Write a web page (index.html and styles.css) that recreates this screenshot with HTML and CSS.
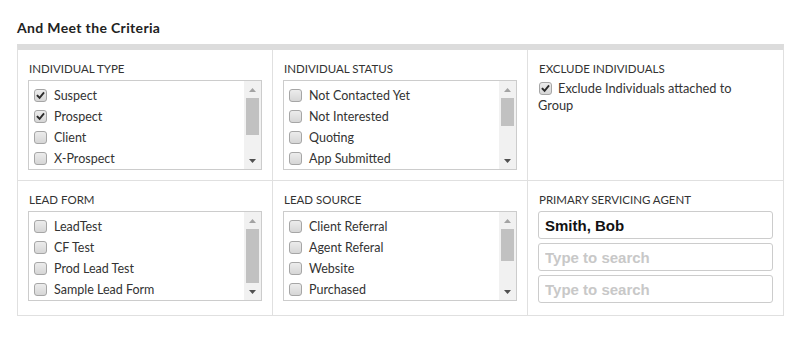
FILE: index.html
```html
<!DOCTYPE html>
<html lang="en">
<head>
<meta charset="utf-8">
<title>And Meet the Criteria</title>
<link rel="stylesheet" href="styles.css">
</head>
<body>
<div class="page">
  <h2 class="title">And Meet the Criteria</h2>
  <div class="criteria">
    <div class="cell">
      <div class="label">Individual Type</div>
      <div class="listbox">
        <div class="options">
          <div class="opt"><span class="cb checked"><svg viewBox="0 0 13 13"><path d="M3 6.8 L5.4 9.2 L10 3.6"/></svg></span>Suspect</div>
          <div class="opt"><span class="cb checked"><svg viewBox="0 0 13 13"><path d="M3 6.8 L5.4 9.2 L10 3.6"/></svg></span>Prospect</div>
          <div class="opt"><span class="cb"></span>Client</div>
          <div class="opt"><span class="cb"></span>X-Prospect</div>
        </div>
        <div class="scrollbar">
          <div class="sb-btn"><svg viewBox="0 0 17 17"><path class="up" d="M5 11 L8.5 7 L12 11 Z"/></svg></div>
          <div class="sb-track"><div class="sb-thumb" style="height:37px"></div></div>
          <div class="sb-btn"><svg viewBox="0 0 17 17"><path class="down" d="M5 7 L12 7 L8.5 11 Z"/></svg></div>
        </div>
      </div>
    </div>
    <div class="cell">
      <div class="label">Individual Status</div>
      <div class="listbox">
        <div class="options">
          <div class="opt"><span class="cb"></span>Not Contacted Yet</div>
          <div class="opt"><span class="cb"></span>Not Interested</div>
          <div class="opt"><span class="cb"></span>Quoting</div>
          <div class="opt"><span class="cb"></span>App Submitted</div>
        </div>
        <div class="scrollbar">
          <div class="sb-btn"><svg viewBox="0 0 17 17"><path class="up" d="M5 11 L8.5 7 L12 11 Z"/></svg></div>
          <div class="sb-track"><div class="sb-thumb" style="height:28px"></div></div>
          <div class="sb-btn"><svg viewBox="0 0 17 17"><path class="down" d="M5 7 L12 7 L8.5 11 Z"/></svg></div>
        </div>
      </div>
    </div>
    <div class="cell">
      <div class="label">Exclude Individuals</div>
      <div class="exclude"><span class="cb checked inline"><svg viewBox="0 0 13 13"><path d="M3 6.8 L5.4 9.2 L10 3.6"/></svg></span>Exclude Individuals attached to Group</div>
    </div>
    <div class="cell last-row">
      <div class="label">Lead Form</div>
      <div class="listbox">
        <div class="options">
          <div class="opt"><span class="cb"></span>LeadTest</div>
          <div class="opt"><span class="cb"></span>CF Test</div>
          <div class="opt"><span class="cb"></span>Prod Lead Test</div>
          <div class="opt"><span class="cb"></span>Sample Lead Form</div>
        </div>
        <div class="scrollbar">
          <div class="sb-btn"><svg viewBox="0 0 17 17"><path class="up" d="M5 11 L8.5 7 L12 11 Z"/></svg></div>
          <div class="sb-track"><div class="sb-thumb" style="height:54px"></div></div>
          <div class="sb-btn"><svg viewBox="0 0 17 17"><path class="down" d="M5 7 L12 7 L8.5 11 Z"/></svg></div>
        </div>
      </div>
    </div>
    <div class="cell last-row">
      <div class="label">Lead Source</div>
      <div class="listbox">
        <div class="options">
          <div class="opt"><span class="cb"></span>Client Referral</div>
          <div class="opt"><span class="cb"></span>Agent Referal</div>
          <div class="opt"><span class="cb"></span>Website</div>
          <div class="opt"><span class="cb"></span>Purchased</div>
        </div>
        <div class="scrollbar">
          <div class="sb-btn"><svg viewBox="0 0 17 17"><path class="up" d="M5 11 L8.5 7 L12 11 Z"/></svg></div>
          <div class="sb-track"><div class="sb-thumb" style="height:32px"></div></div>
          <div class="sb-btn"><svg viewBox="0 0 17 17"><path class="down" d="M5 7 L12 7 L8.5 11 Z"/></svg></div>
        </div>
      </div>
    </div>
    <div class="cell last-row">
      <div class="label">Primary Servicing Agent</div>
      <div class="agents">
        <input class="search" type="text" value="Smith, Bob">
        <input class="search" type="text" placeholder="Type to search">
        <input class="search" type="text" placeholder="Type to search">
      </div>
    </div>
  </div>
</div>
</body>
</html>
```

FILE: styles.css
```css
* { box-sizing: border-box; }

body {
  margin: 0;
  background: #fff;
  font-family: Lato, "Open Sans", sans-serif;
  color: #333;
}

.page {
  padding: 19px 0 0 17px;
}

.title {
  margin: 0 0 7px;
  font-size: 14px;
  line-height: 18px;
  font-weight: 700;
  letter-spacing: 0.35px;
  color: #222;
}

.criteria {
  width: 767px;
  display: grid;
  grid-template-columns: repeat(3, 1fr);
  border: 1px solid #e0e0e0;
  border-top: 6px solid #dcdcdc;
}

.cell {
  padding: 10px;
  border-right: 1px solid #e0e0e0;
  border-bottom: 1px solid #e0e0e0;
}

.cell:nth-child(3n) { border-right: none; }

.cell.last-row {
  border-bottom: none;
  padding-bottom: 12px;
}

.label {
  font-size: 11.5px;
  line-height: 18px;
  text-transform: uppercase;
  color: #333;
  padding-left: 1px;
  margin-bottom: 2px;
}

.listbox {
  display: flex;
  height: 90px;
  border: 1px solid #cccccc;
  background: #fff;
}

.options {
  flex: 1;
  overflow: hidden;
  padding: 4px 0 0 5px;
}

.opt {
  display: flex;
  align-items: center;
  gap: 7px;
  height: 21px;
  font-size: 12.5px;
  color: #333;
  white-space: nowrap;
}

.cb {
  flex: none;
  display: inline-block;
  width: 13px;
  height: 13px;
  border: 1px solid #a6a6a6;
  border-radius: 3px;
  background: linear-gradient(#ececec, #d6d6d6);
}

.cb svg {
  display: block;
  width: 11px;
  height: 11px;
}

.cb svg path {
  fill: none;
  stroke: #2a2a2a;
  stroke-width: 2.2;
  stroke-linecap: square;
}

.cb.inline {
  vertical-align: -2px;
  margin: 0 6px 0 1px;
}

.scrollbar {
  flex: none;
  width: 17px;
  display: flex;
  flex-direction: column;
  background: #f1f1f1;
}

.sb-btn {
  height: 17px;
}

.sb-btn svg {
  display: block;
  width: 17px;
  height: 17px;
}

.sb-btn .up { fill: #a3a3a3; }
.sb-btn .down { fill: #505050; }

.sb-track {
  flex: 1;
  padding: 0 2px;
}

.sb-thumb {
  background: #c1c1c1;
}

.exclude {
  font-size: 12.8px;
  line-height: 17px;
  color: #333;
  padding-right: 14px;
}

.agents {
  display: flex;
  flex-direction: column;
  gap: 4px;
}

.search {
  display: block;
  width: 100%;
  height: 28px;
  margin: 0;
  padding: 0 6px;
  border: 1px solid #cccccc;
  border-radius: 3px;
  font-family: "Liberation Sans", Arial, sans-serif;
  font-size: 15px;
  font-weight: 700;
  color: #111;
  background: #fff;
  outline: none;
}

.search::placeholder {
  color: #c8c8c8;
  opacity: 1;
}
```
